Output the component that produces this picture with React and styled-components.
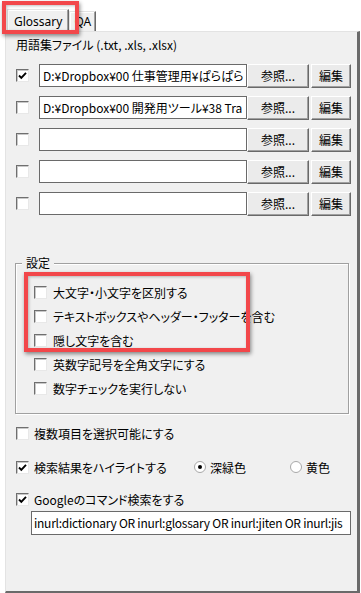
import React from "react";
import styled, { createGlobalStyle } from "styled-components";

const GlobalStyle = createGlobalStyle`
  html, body { margin: 0; padding: 0; background: #fff; overflow: hidden; }
  body {
    font-family: "Noto Sans CJK JP", "Noto Sans", sans-serif;
    font-size: 12px;
    color: #000;
    font-feature-settings: "palt";
  }
`;

const Page = styled.div`
  position: relative;
  width: 361px;
  height: 593px;
  background: #fff;
  display: flex;
  flex-direction: column;
`;

const TabStrip = styled.div`
  display: flex;
  align-items: flex-end;
  height: 31px;
  padding-left: 7px;
  position: relative;
  z-index: 1;
`;

const Tab = styled.div`
  box-sizing: border-box;
  height: ${(p) => (p.$active ? "24px" : "20px")};
  margin-bottom: ${(p) => (p.$active ? "-2px" : "0")};
  padding: 0 ${(p) => (p.$active ? "6px" : "4px")};
  display: flex;
  align-items: center;
  background: #f0f0f0;
  border-top: 1px solid #e3e3e3;
  border-left: 1px solid #e3e3e3;
  border-right: 1px solid #696969;
  box-shadow: inset -1px 0 0 #a0a0a0, inset 1px 1px 0 #fff;
  font-family: "Noto Sans", "Noto Sans CJK JP", sans-serif;
  font-size: 12px;
  line-height: 1;
  color: #000;
`;

const Panel = styled.div`
  box-sizing: border-box;
  margin-left: 5px;
  margin-right: 1px;
  flex: 1;
  background: #f0f0f0;
  border-top: 1px solid #e3e3e3;
  border-left: 1px solid #e3e3e3;
  border-right: 3px solid #6a6a6a;
  border-bottom: 2px solid #6a6a6a;
  padding: 5px 0 0 10px;
  display: flex;
  flex-direction: column;
`;

const SectionLabel = styled.div`
  line-height: 16px;
  height: 16px;
`;

const FileList = styled.div`
  margin-top: 11px;
  display: flex;
  flex-direction: column;
  gap: 9px;
`;

const FileRow = styled.div`
  display: flex;
  align-items: center;
  height: 23px;
`;

const Box = styled.span`
  box-sizing: border-box;
  flex: none;
  width: 13px;
  height: 13px;
  background: #fff;
  border: 1px solid;
  border-color: #6f6f6f #e8e8e8 #e8e8e8 #6f6f6f;
  box-shadow: inset 1px 1px 0 #c8c8c8;
  display: inline-flex;
  align-items: center;
  justify-content: center;
  margin-right: ${(p) => p.$gap || 5}px;
`;

const Check = ({ checked, gap }) => (
  <Box $gap={gap}>
    {checked && (
      <svg width="11" height="11" viewBox="0 0 11 11">
        <path d="M2 5.5 L4.3 7.8 L9 2.8" fill="none" stroke="#000" strokeWidth="1.9" />
      </svg>
    )}
  </Box>
);

const PathInput = styled.div`
  box-sizing: border-box;
  flex: none;
  width: 208px;
  height: 23px;
  background: #fff;
  border: 1px solid #6a6a6a;
  padding: 0 3px;
  line-height: 21px;
  white-space: nowrap;
  overflow: hidden;
`;

const Button = styled.div`
  box-sizing: border-box;
  flex: none;
  width: ${(p) => p.$w}px;
  height: 24px;
  margin-left: ${(p) => p.$ml || 0}px;
  background: #ebebeb;
  border-top: 1px solid #fff;
  border-left: 1px solid #fff;
  border-right: 1px solid #696969;
  border-bottom: 1px solid #696969;
  box-shadow: inset -1px -1px 0 #a0a0a0;
  display: flex;
  align-items: center;
  justify-content: center;
  padding-bottom: 1px;
`;

const GroupBox = styled.div`
  position: relative;
  box-sizing: border-box;
  margin-top: 48px;
  margin-left: -1px;
  width: 334px;
  border: 1px solid #a0a0a0;
  box-shadow: inset 1px 1px 0 #fff, 1px 1px 0 #fff;
  padding: 16px 0 13px 18px;
  display: flex;
  flex-direction: column;
`;

const Legend = styled.div`
  position: absolute;
  top: -9px;
  left: 6px;
  padding: 0 4px;
  background: #f0f0f0;
  line-height: 16px;
`;

const OptionRow = styled.div`
  display: flex;
  align-items: center;
  height: 24px;
  margin-top: ${(p) => p.$mt || 0}px;
  white-space: nowrap;
`;

const HighlightRow = styled.div`
  display: grid;
  grid-template-columns: 178px 96px auto;
  align-items: center;
  height: 24px;
  margin-top: 10px;
`;

const Cell = styled.div`
  display: flex;
  align-items: center;
  white-space: nowrap;
`;

const RadioDot = styled.span`
  box-sizing: border-box;
  width: 12px;
  height: 12px;
  border-radius: 50%;
  background: #fff;
  border: 1px solid #a8a8a8;
  display: inline-flex;
  align-items: center;
  justify-content: center;
  margin-right: 4px;
  &::after {
    content: "";
    width: 4px;
    height: 4px;
    border-radius: 50%;
    background: ${(p) => (p.$on ? "#000" : "transparent")};
  }
`;

const QueryInput = styled.div`
  box-sizing: border-box;
  margin-left: 15px;
  width: 320px;
  height: 24px;
  background: #fff;
  border: 1px solid #6a6a6a;
  padding: 0 2px;
  line-height: 22px;
  letter-spacing: -0.25px;
  white-space: nowrap;
  overflow: hidden;
`;

const Annotation = styled.div`
  position: absolute;
  box-sizing: border-box;
  left: ${(p) => p.$x}px;
  top: ${(p) => p.$y}px;
  width: ${(p) => p.$w}px;
  height: ${(p) => p.$h}px;
  border: 4px solid #f2474a;
  box-shadow: 1px 2px 4px rgba(0, 0, 0, 0.45), inset 1px 1px 3px rgba(0, 0, 0, 0.25);
  pointer-events: none;
  z-index: 5;
`;

const files = [
  { checked: true, path: "D:¥Dropbox¥00 仕事管理用¥ぱらぱら" },
  { checked: false, path: "D:¥Dropbox¥00 開発用ツール¥38 Tra" },
  { checked: false, path: "" },
  { checked: false, path: "" },
  { checked: false, path: "" },
];

const settings = [
  "大文字・小文字を区別する",
  "テキストボックスやヘッダー・フッターを含む",
  "隠し文字を含む",
  "英数字記号を全角文字にする",
  "数字チェックを実行しない",
];

export default function App() {
  return (
    <>
      <GlobalStyle />
      <Page>
        <TabStrip>
          <Tab $active>Glossary</Tab>
          <Tab>QA</Tab>
        </TabStrip>
        <Panel>
          <SectionLabel>用語集ファイル (.txt, .xls, .xlsx)</SectionLabel>
          <FileList>
            {files.map((f, i) => (
              <FileRow key={i}>
                <Check checked={f.checked} gap={10} />
                <PathInput>{f.path}</PathInput>
                <Button $w={62}>参照...</Button>
                <Button $w={40} $ml={2}>編集</Button>
              </FileRow>
            ))}
          </FileList>
          <GroupBox>
            <Legend>設定</Legend>
            {settings.map((s) => (
              <OptionRow key={s}>
                <Check gap={6} />
                {s}
              </OptionRow>
            ))}
          </GroupBox>
          <OptionRow $mt={7}>
            <Check gap={5} />
            複数項目を選択可能にする
          </OptionRow>
          <HighlightRow>
            <Cell>
              <Check checked gap={5} />
              検索結果をハイライトする
            </Cell>
            <Cell>
              <RadioDot $on />
              深緑色
            </Cell>
            <Cell>
              <RadioDot />
              黄色
            </Cell>
          </HighlightRow>
          <OptionRow $mt={8}>
            <Check checked gap={5} />
            Googleのコマンド検索をする
          </OptionRow>
          <QueryInput>inurl:dictionary OR inurl:glossary OR inurl:jiten OR inurl:jis</QueryInput>
        </Panel>
        <Annotation $x={2} $y={1} $w={77} $h={33} />
        <Annotation $x={24} $y={272} $w={226} $h={80} />
      </Page>
    </>
  );
}
